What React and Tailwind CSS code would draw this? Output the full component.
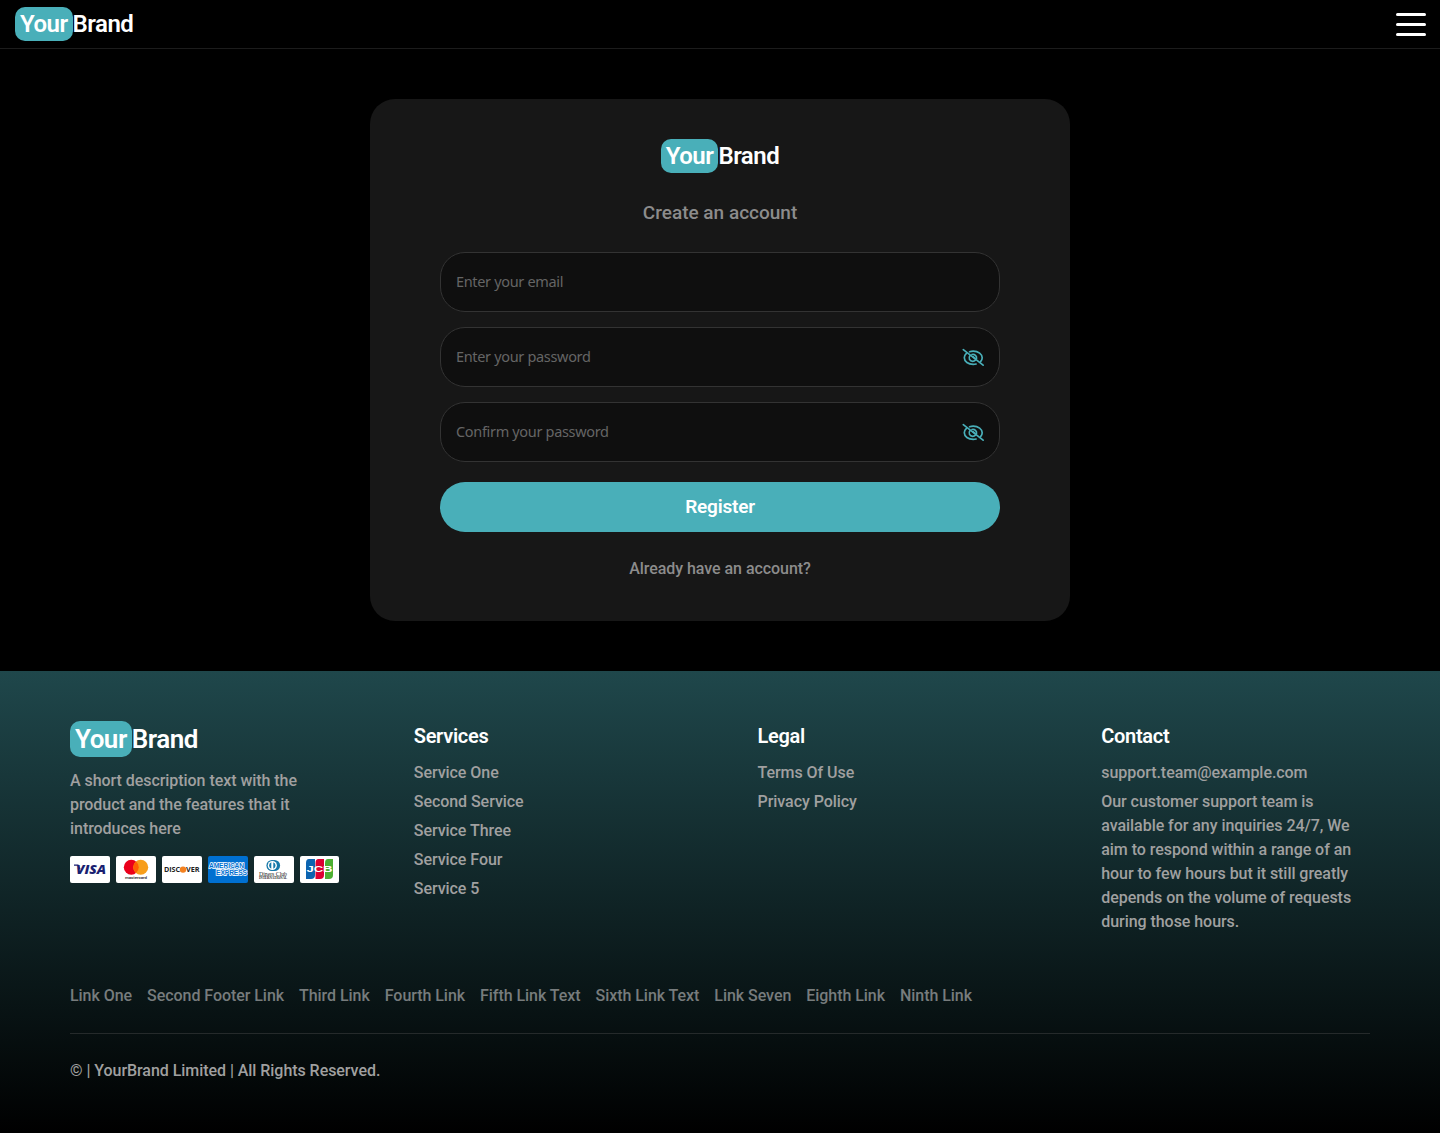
import { useState } from "react";

const services = ["Service One", "Second Service", "Service Three", "Service Four", "Service 5"];
const legal = ["Terms Of Use", "Privacy Policy"];
const moreLinks = [
  "Link One",
  "Second Footer Link",
  "Third Link",
  "Fourth Link",
  "Fifth Link Text",
  "Sixth Link Text",
  "Link Seven",
  "Eighth Link",
  "Ninth Link",
];

function Logo({ large }) {
  return (
    <div
      className={
        large
          ? "flex w-fit items-center text-[26px] leading-9 font-semibold tracking-[-0.5px] text-white"
          : "flex w-fit items-center text-[24px] leading-[34px] font-semibold tracking-[-0.5px] text-white"
      }
    >
      <span className="rounded-[10px] bg-[#49afb9] px-[5px]">Your</span>
      <span>Brand</span>
    </div>
  );
}

function EyeOff() {
  return (
    <svg width="22" height="20" viewBox="0 0 22 20" fill="none" stroke="#49afb9" strokeWidth="1.7" strokeLinecap="round" className="mt-px">
      <path d="M4.4 5.4C3.1 6.6 2.3 8.2 2.3 9.8c0 3.6 4 6.6 8.9 6.6 1.1 0 2-.1 2.9-.4" />
      <path d="M7.6 3.7c1.1-.4 2.3-.6 3.6-.6 5.1 0 9 3.1 9 6.7 0 1.4-.6 2.7-1.6 3.8" />
      <path d="M7.9 7.8c-1.8 2.4-.2 5.5 2.8 5.5 1.1 0 2-.4 2.7-1.1" />
      <path d="M10 6.5c2.7-.6 5 1.4 4.5 4" />
      <path d="M11.3 9l1.7 1.4" />
      <path d="M1.3 1.7l19.8 15.5" />
    </svg>
  );
}

function Field({ name, type, placeholder, value, onChange }) {
  const [visible, setVisible] = useState(false);
  const isPassword = type === "password";

  return (
    <div className="flex h-[60px] items-center rounded-[25px] border border-[#333] bg-[#0f0f0f] px-[15px]">
      <input
        name={name}
        type={isPassword && visible ? "text" : type}
        placeholder={placeholder}
        value={value}
        onChange={onChange}
        className="min-w-0 flex-1 bg-transparent font-['Noto_Sans',sans-serif] text-[14.5px] font-normal tracking-[-0.33px] text-white outline-none placeholder:text-[#656565]"
      />
      {isPassword && (
        <button type="button" aria-label="Toggle password" onClick={() => setVisible(!visible)}>
          <EyeOff />
        </button>
      )}
    </div>
  );
}

function RegisterForm() {
  const [form, setForm] = useState({ email: "", password: "", confirm: "" });

  const handleChange = (e) => {
    const { name, value } = e.target;
    setForm((prev) => ({ ...prev, [name]: value }));
  };

  return (
    <form
      onSubmit={(e) => e.preventDefault()}
      className="mx-auto flex h-[522px] w-[700px] flex-col rounded-[25px] bg-[#171717] px-[70px] pt-10"
    >
      <div className="flex justify-center">
        <Logo />
      </div>
      <h1 className="mt-[25px] mb-6 text-center text-[19px] leading-[30px] font-medium text-[#8c8c8c]">
        Create an account
      </h1>
      <div className="flex flex-col gap-[15px]">
        <Field name="email" type="email" placeholder="Enter your email" value={form.email} onChange={handleChange} />
        <Field name="password" type="password" placeholder="Enter your password" value={form.password} onChange={handleChange} />
        <Field name="confirm" type="password" placeholder="Confirm your password" value={form.confirm} onChange={handleChange} />
      </div>
      <button type="submit" className="mt-5 h-[50px] rounded-full bg-[#49afb9] text-[19px] font-semibold tracking-[-0.2px] text-white">
        Register
      </button>
      <a href="#" className="mt-[25px] text-center leading-6 font-medium tracking-[-0.05px] text-[#8c8c8c]">
        Already have an account?
      </a>
    </form>
  );
}

function PaymentCards() {
  return (
    <div className="mt-[15px] flex w-max gap-[6px]">
      <svg width="40" height="27" viewBox="0 0 40 27">
        <rect width="40" height="27" rx="2" fill="#fff" />
        <path d="M4 9.2h4l2 4" fill="none" stroke="#1a1f71" strokeWidth="1.2" />
        <text x="6" y="18" textLength="30" lengthAdjust="spacingAndGlyphs" fontFamily="Open Sans" fontSize="12.5" fontWeight="800" fontStyle="italic" fill="#1a1f71">VISA</text>
      </svg>
      <svg width="40" height="27" viewBox="0 0 40 27">
        <rect width="40" height="27" rx="2" fill="#fff" />
        <circle cx="15.3" cy="11.3" r="7.5" fill="#eb001b" />
        <circle cx="24.7" cy="11.3" r="7.5" fill="#f79e1b" />
        <path d="M20 5.5a7.5 7.5 0 0 1 0 11.6A7.5 7.5 0 0 1 20 5.5" fill="#ff5f00" />
        <text x="9" y="23" textLength="22" lengthAdjust="spacingAndGlyphs" fontFamily="Roboto" fontSize="4.2" fill="#222">mastercard</text>
      </svg>
      <svg width="40" height="27" viewBox="0 0 40 27">
        <rect width="40" height="27" rx="2" fill="#fff" />
        <circle cx="21" cy="13.6" r="3.2" fill="#f48120" />
        <text x="2" y="16.2" textLength="16" lengthAdjust="spacingAndGlyphs" fontFamily="Open Sans" fontSize="7" fontWeight="700" fill="#222">DISC</text>
        <text x="24" y="16.2" textLength="13.5" lengthAdjust="spacingAndGlyphs" fontFamily="Open Sans" fontSize="7" fontWeight="700" fill="#222">VER</text>
      </svg>
      <svg width="40" height="27" viewBox="0 0 40 27">
        <rect width="40" height="27" rx="2" fill="#0070d1" />
        <g fontFamily="Liberation Sans" fontSize="6.5" fontWeight="700" fill="#0070d1" stroke="#fff" strokeWidth="1.4" paintOrder="stroke">
          <text x="1" y="11.5" textLength="35" lengthAdjust="spacingAndGlyphs">AMERICAN</text>
          <text x="8" y="19" textLength="31" lengthAdjust="spacingAndGlyphs">EXPRESS</text>
        </g>
      </svg>
      <svg width="40" height="27" viewBox="0 0 40 27">
        <rect width="40" height="27" rx="2" fill="#fff" />
        <circle cx="18" cy="9.5" r="5.6" fill="#1678a9" />
        <circle cx="20.5" cy="9.5" r="5.6" fill="#1678a9" />
        <circle cx="18.3" cy="9.5" r="4.6" fill="#fff" />
        <path d="M17.3 6.3a3.4 3.4 0 0 0 0 6.4zM19.3 6.3a3.4 3.4 0 0 1 0 6.4z" fill="#1678a9" />
        <text x="5" y="20" textLength="28" lengthAdjust="spacingAndGlyphs" fontFamily="Liberation Serif" fontSize="6.2" fill="#222">Diners Club</text>
        <text x="5" y="23.4" textLength="28" lengthAdjust="spacingAndGlyphs" fontFamily="Liberation Serif" fontSize="3" fontWeight="700" fill="#222">INTERNATIONAL</text>
      </svg>
      <svg width="39" height="27" viewBox="0 0 39 27">
        <rect width="39" height="27" rx="2" fill="#fff" />
        <path d="M9 3h6v16q0 4-4 4H6V7q0-4 3-4" fill="#0b63b0" />
        <path d="M18.5 3H24v16q0 4-4 4h-4.5V7q0-4 3-4" fill="#dc0032" />
        <path d="M28 3h5v16q0 4-4 4h-4V7q0-4 3-4" fill="#4caf32" />
        <text x="6.5" y="16" textLength="26" lengthAdjust="spacingAndGlyphs" fontFamily="Liberation Sans" fontSize="8.5" fontWeight="700" fill="#fff">JCB</text>
      </svg>
    </div>
  );
}

function FooterTitle({ children }) {
  return <h2 className="mb-[10px] text-[20px] leading-[30px] font-semibold tracking-[-0.3px] text-white">{children}</h2>;
}

function FooterLinks({ title, links }) {
  return (
    <div>
      <FooterTitle>{title}</FooterTitle>
      <ul className="flex flex-col gap-[5px]">
        {links.map((link) => (
          <li key={link}>
            <a href="#">{link}</a>
          </li>
        ))}
      </ul>
    </div>
  );
}

function Footer() {
  return (
    <footer className="h-[462px] bg-linear-to-b/srgb from-[#1f474b] to-black px-[70px] pt-[50px] text-base font-medium tracking-[-0.05px] text-[#a0a0a0]">
      <div className="grid h-[263px] grid-cols-4 gap-[75px]">
        <div>
          <Logo large />
          <p className="mt-3">
            A short description text with the
            <br />
            product and the features that it
            <br />
            introduces here
          </p>
          <PaymentCards />
        </div>
        <FooterLinks title="Services" links={services} />
        <FooterLinks title="Legal" links={legal} />
        <div>
          <FooterTitle>Contact</FooterTitle>
          <p>support.team@example.com</p>
          <p className="mt-[5px]">
            Our customer support team is
            <br />
            available for any inquiries 24/7, We
            <br />
            aim to respond within a range of an
            <br />
            hour to few hours but it still greatly
            <br />
            depends on the volume of requests
            <br />
            during those hours.
          </p>
        </div>
      </div>
      <div className="flex gap-[15px] border-b border-[#252a2b] pb-[25px] text-[#777c7d]">
        {moreLinks.map((link) => (
          <a key={link} href="#">
            {link}
          </a>
        ))}
      </div>
      <p className="mt-[25px]">© | YourBrand Limited | All Rights Reserved.</p>
    </footer>
  );
}

function App() {
  return (
    <div className="bg-black font-['Roboto',sans-serif]">
      <header className="flex h-[49px] items-center justify-between border-b border-[#1c1c1c] pr-[14px] pl-[15px]">
        <Logo />
        <button type="button" aria-label="Menu" className="flex flex-col gap-[7px]">
          <span className="h-[3px] w-[30px] rounded-full bg-white" />
          <span className="h-[3px] w-[30px] rounded-full bg-white" />
          <span className="h-[3px] w-[30px] rounded-full bg-white" />
        </button>
      </header>
      <main className="py-[50px]">
        <RegisterForm />
      </main>
      <Footer />
    </div>
  );
}

export default App;
